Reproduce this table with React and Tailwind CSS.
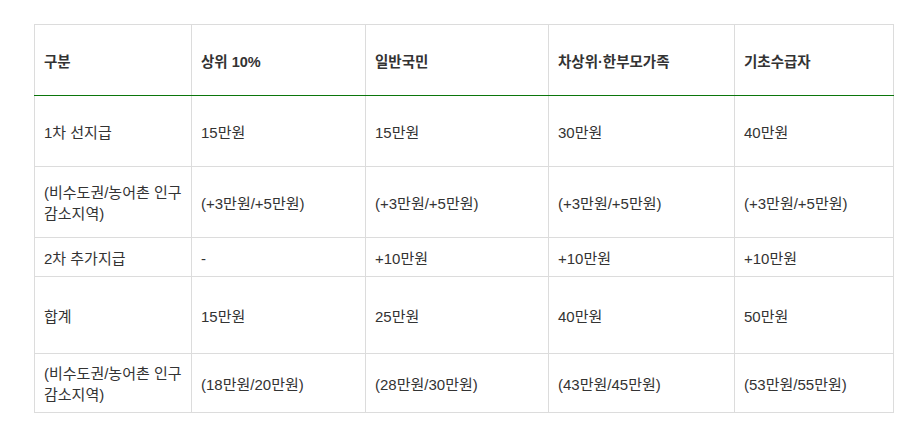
const headers = ['구분', '상위 10%', '일반국민', '차상위·한부모가족', '기초수급자'];

const rows = [
  { h: 'h-[71px]', cells: ['1차 선지급', '15만원', '15만원', '30만원', '40만원'] },
  {
    h: 'h-[71px]',
    cells: ['(비수도권/농어촌 인구 감소지역)', '(+3만원/+5만원)', '(+3만원/+5만원)', '(+3만원/+5만원)', '(+3만원/+5만원)'],
  },
  { h: 'h-[39px]', cells: ['2차 추가지급', '-', '+10만원', '+10만원', '+10만원'] },
  { h: 'h-[77px]', cells: ['합계', '15만원', '25만원', '40만원', '50만원'] },
  {
    h: 'h-[59px]',
    cells: ['(비수도권/농어촌 인구 감소지역)', '(18만원/20만원)', '(28만원/30만원)', '(43만원/45만원)', '(53만원/55만원)'],
  },
];

const widths = ['w-[157px]', 'w-[174px]', 'w-[183px]', 'w-[186px]', 'w-[159px]'];

export default function App() {
  return (
    <div
      className="min-h-screen bg-white pt-[24px] pl-[34px] text-[15px] leading-[21px] text-[#333]"
      style={{ fontFamily: '"Liberation Sans", "Noto Sans CJK KR", sans-serif' }}
    >
      <table className="w-[859px] table-fixed border-collapse">
        <colgroup>
          {widths.map((w, i) => (
            <col key={i} className={w} />
          ))}
        </colgroup>
        <thead>
          <tr className="h-[71px] border-b border-b-[#0b760b]">
            {headers.map((h) => (
              <th
                key={h}
                className="border border-[#dcdcdc] border-b-[#0b760b] px-[9px] pt-[5px] text-left align-middle text-[14.5px] font-bold"
              >
                {h}
              </th>
            ))}
          </tr>
        </thead>
        <tbody>
          {rows.map((row, r) => (
            <tr key={r} className={row.h}>
              {row.cells.map((c, i) => (
                <td key={i} className="border border-[#dcdcdc] px-[9px] pt-[2px] align-middle">
                  {c}
                </td>
              ))}
            </tr>
          ))}
        </tbody>
      </table>
    </div>
  );
}
